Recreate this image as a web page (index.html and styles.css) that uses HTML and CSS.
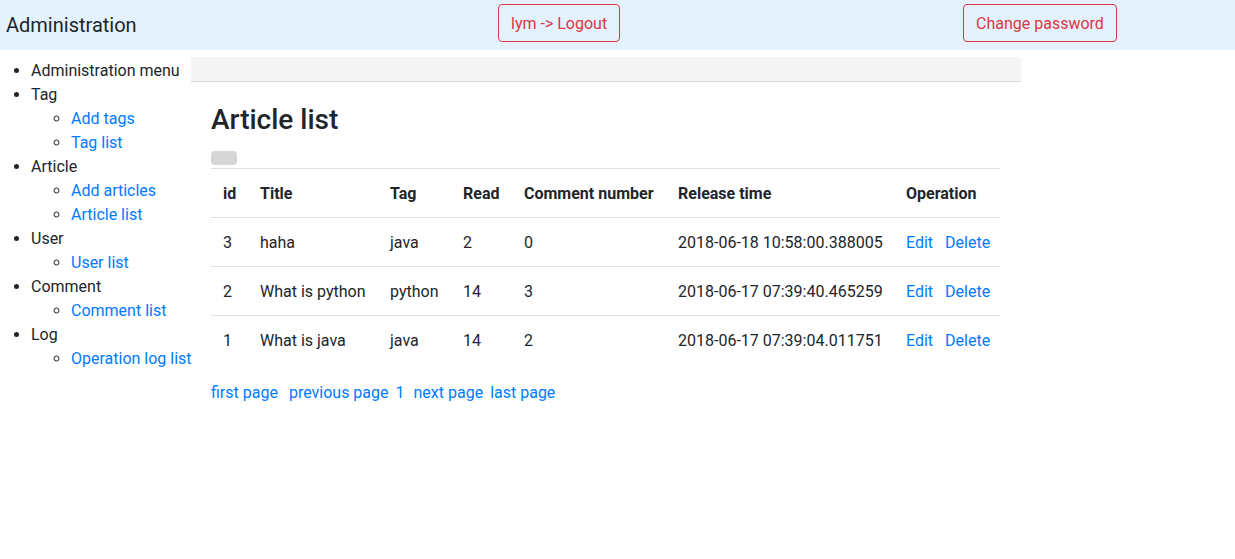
FILE: index.html
```html
<!DOCTYPE html>
<html lang="en">
<head>
<meta charset="utf-8">
<title>Administration</title>
<link rel="stylesheet" href="styles.css">
</head>
<body>
<header class="topbar">
  <div class="brand">Administration</div>
  <div class="top-cell"><a class="btn-outline" href="#">lym -&gt; Logout</a></div>
  <div class="top-cell"><a class="btn-outline" href="#">Change password</a></div>
</header>
<div class="layout">
  <nav class="sidebar">
    <ul class="menu">
      <li>Administration menu</li>
      <li>Tag
        <ul>
          <li><a href="#">Add tags</a></li>
          <li><a href="#">Tag list</a></li>
        </ul>
      </li>
      <li>Article
        <ul>
          <li><a href="#">Add articles</a></li>
          <li><a href="#">Article list</a></li>
        </ul>
      </li>
      <li>User
        <ul>
          <li><a href="#">User list</a></li>
        </ul>
      </li>
      <li>Comment
        <ul>
          <li><a href="#">Comment list</a></li>
        </ul>
      </li>
      <li>Log
        <ul>
          <li><a href="#">Operation log list</a></li>
        </ul>
      </li>
    </ul>
  </nav>
  <main class="main">
    <div class="crumb"></div>
    <div class="content">
      <h3 class="title">Article list</h3>
      <span class="blank-btn"></span>
      <table class="grid">
        <colgroup>
          <col class="c-id"><col class="c-title"><col class="c-tag"><col class="c-read"><col class="c-comment"><col class="c-time"><col class="c-op">
        </colgroup>
        <thead>
          <tr><th>id</th><th>Title</th><th>Tag</th><th>Read</th><th>Comment number</th><th>Release time</th><th>Operation</th></tr>
        </thead>
        <tbody>
          <tr><td>3</td><td>haha</td><td>java</td><td>2</td><td>0</td><td>2018-06-18 10:58:00.388005</td><td><a href="#">Edit</a><a class="op" href="#">Delete</a></td></tr>
          <tr><td>2</td><td>What is python</td><td>python</td><td>14</td><td>3</td><td>2018-06-17 07:39:40.465259</td><td><a href="#">Edit</a><a class="op" href="#">Delete</a></td></tr>
          <tr><td>1</td><td>What is java</td><td>java</td><td>14</td><td>2</td><td>2018-06-17 07:39:04.011751</td><td><a href="#">Edit</a><a class="op" href="#">Delete</a></td></tr>
        </tbody>
      </table>
      <div class="pager">
        <a class="p-first" href="#">first page</a>
        <a class="p-prev" href="#">previous page</a>
        <a class="p-num" href="#">1</a>
        <a class="p-next" href="#">next page</a>
        <a class="p-last" href="#">last page</a>
      </div>
    </div>
  </main>
</div>
</body>
</html>
```

FILE: styles.css
```css
* { box-sizing: border-box; }
body {
  margin: 0;
  font-family: Roboto, "Liberation Sans", sans-serif;
  font-size: 16px;
  line-height: 1.5;
  color: #212529;
  background: #fff;
}
a { color: #007bff; text-decoration: none; }

.topbar {
  height: 50px;
  background: #e3f2fd;
  display: grid;
  grid-template-columns: 498px 465px auto;
  align-items: start;
}
.brand {
  font-size: 20px;
  line-height: 24px;
  padding: 13px 0 0 6px;
}
.top-cell { padding-top: 4px; }
.btn-outline {
  display: inline-block;
  border: 1px solid #dc3545;
  color: #dc3545;
  border-radius: 4px;
  padding: 7px 12px 5px;
  line-height: 24px;
  font-size: 16px;
}

.layout { display: flex; align-items: flex-start; }
.sidebar { width: 191px; flex: none; padding-top: 9px; }
.menu { margin: 0; padding-left: 31px; }
.menu ul { margin: 0; padding-left: 40px; list-style: circle; }
.menu li { line-height: 24px; white-space: nowrap; }

.main { width: 830px; flex: none; padding-top: 7px; }
.crumb {
  height: 25px;
  background: #f5f5f5;
  border-bottom: 1px solid #d8d8d8;
  border-radius: 4px 4px 0 0;
}
.content { padding: 0 20px; }
.title {
  margin: 21px 0 14px;
  font-size: 28px;
  font-weight: 500;
  line-height: 1.2;
}
.blank-btn {
  display: block;
  width: 26px;
  height: 14px;
  background: #d6d6d6;
  border-radius: 4px;
  margin-bottom: 3px;
}
.grid {
  width: 789px;
  border-collapse: collapse;
  table-layout: fixed;
}
.c-id { width: 37px; }
.c-title { width: 130px; }
.c-tag { width: 73px; }
.c-read { width: 61px; }
.c-comment { width: 154px; }
.c-time { width: 228px; }
.c-op { width: 106px; }
.grid th, .grid td {
  padding: 13px 12px 11px;
  text-align: left;
  border-top: 1px solid #dee2e6;
  line-height: 24px;
  white-space: nowrap;
}
.grid th { font-weight: 700; }
.op { margin-left: 12px; }

.pager { margin-top: 17px; line-height: 24px; display: flex; }
.p-prev { margin-left: 11px; }
.p-num { margin-left: 7px; }
.p-next { margin-left: 9px; }
.p-last { margin-left: 7px; }
```
